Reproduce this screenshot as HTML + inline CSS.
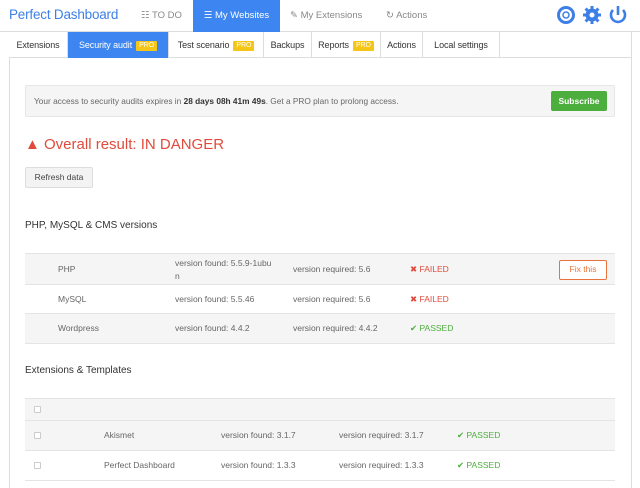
<!DOCTYPE html>
<html><head><meta charset="utf-8"><style>
*{margin:0;padding:0;box-sizing:border-box}
body{width:640px;height:480px;overflow:hidden;background:#fff;font-family:"Liberation Sans",sans-serif;font-size:10px;color:#555;position:relative}
.a{position:absolute;white-space:nowrap}
.top{position:absolute;left:0;top:0;width:640px;height:32px;border-bottom:1px solid #ddd}
.sub{position:absolute;left:9px;top:32px;width:623px;height:26px;border-bottom:1px solid #ddd;border-right:1px solid #ddd}
.st{position:absolute;top:0;height:26px;line-height:26px;font-size:9px;color:#333;border-right:1px solid #ddd;text-align:center;letter-spacing:-0.1px}
.pro{display:inline-block;background:#f5c518;color:#fff;font-size:7px;padding:0 3px;line-height:10px;border-radius:1px;margin-left:4px;vertical-align:1px}
.panel{position:absolute;left:9px;top:58px;width:623px;height:430px;border-left:1px solid #ddd;border-right:1px solid #ddd}
.row{position:absolute;left:25px;width:590px;border-bottom:1px solid #e4e4e4;font-size:8.5px;color:#666}
.g{background:#f5f5f5}
.red{color:#e04b3c}.grn{color:#4cae3c}
.cb{position:absolute;left:9px;width:7px;height:7px;border:1px solid #ccc;border-radius:1px;background:#fff}
</style></head><body>
<div class="top"></div>
<div class="a" style="left:9px;top:7px;font-size:13.5px;color:#3d7fe6;letter-spacing:-0.2px">Perfect Dashboard</div>
<div class="a" style="left:141px;top:10px;font-size:9.5px;color:#888">☷ TO DO</div>
<div class="a" style="left:193px;top:0;width:87px;height:32px;background:#3d85f0;color:#fff;font-size:9.5px;line-height:31px;text-align:center">☰ My Websites</div>
<div class="a" style="left:290px;top:10px;font-size:9.5px;color:#888">✎ My Extensions</div>
<div class="a" style="left:386px;top:10px;font-size:9.5px;color:#888">↻ Actions</div>
<svg class="a" style="left:556px;top:5px" width="80" height="22" viewBox="0 0 80 22">
<circle cx="10" cy="10" r="7.5" fill="none" stroke="#3d7fe6" stroke-width="3"/><circle cx="10" cy="10" r="3" fill="none" stroke="#3d7fe6" stroke-width="1.5"/>
<g fill="#3d7fe6"><circle cx="36" cy="10" r="6.5"/><g stroke="#3d7fe6" stroke-width="3"><line x1="36" y1="1" x2="36" y2="19"/><line x1="27" y1="10" x2="45" y2="10"/><line x1="29.6" y1="3.6" x2="42.4" y2="16.4"/><line x1="42.4" y1="3.6" x2="29.6" y2="16.4"/></g></g>
<circle cx="36" cy="10" r="2.5" fill="#fff"/>
<path d="M57 5 A7 7 0 1 0 67 5" fill="none" stroke="#3d7fe6" stroke-width="2.6"/><line x1="62" y1="1" x2="62" y2="10" stroke="#3d7fe6" stroke-width="2.6"/>
</svg>
<div class="sub">
<div class="st" style="left:0;width:59px">Extensions</div>
<div class="st" style="left:59px;width:101px;background:#3d85f0;color:#fff">Security audit<span class="pro">PRO</span></div>
<div class="st" style="left:160px;width:95px">Test scenario<span class="pro">PRO</span></div>
<div class="st" style="left:255px;width:48px">Backups</div>
<div class="st" style="left:303px;width:69px">Reports<span class="pro">PRO</span></div>
<div class="st" style="left:372px;width:42px">Actions</div>
<div class="st" style="left:414px;width:77px">Local settings</div>
</div>
<div class="panel"></div>
<div class="a" style="left:25px;top:85px;width:590px;height:32px;background:#f5f5f5;border:1px solid #e6e6e6;border-radius:2px"></div>
<div class="a" style="left:34px;top:96px;font-size:8.3px;color:#666">Your access to security audits expires in <b style="color:#333">28 days 08h 41m 49s</b>. Get a PRO plan to prolong access.</div>
<div class="a" style="left:551px;top:91px;width:56px;height:20px;background:#4cae3c;border-radius:2px;color:#fff;font-size:8.5px;font-weight:bold;line-height:20px;text-align:center">Subscribe</div>
<div class="a" style="left:25px;top:136px;font-size:15px;color:#e04b3c">▲ Overall result: IN DANGER</div>
<div class="a" style="left:25px;top:167px;width:68px;height:21px;background:#f3f3f3;border:1px solid #ddd;border-radius:2px;font-size:8.5px;color:#444;line-height:19px;text-align:center">Refresh data</div>
<div class="a" style="left:25px;top:220px;font-size:10px;color:#333">PHP, MySQL &amp; CMS versions</div>
<div class="row g" style="top:253px;height:32px;border-top:1px solid #e4e4e4">
<span class="a" style="left:33px;top:10px">PHP</span><span class="a" style="left:150px;top:3px;line-height:13px">version found: 5.5.9-1ubu<br>n</span><span class="a" style="left:268px;top:10px">version required: 5.6</span><span class="a red" style="left:385px;top:10px">✖ FAILED</span>
<span class="a" style="left:534px;top:6px;width:48px;height:20px;border:1.5px solid #e8743b;border-radius:2px;background:#fff;color:#e8743b;font-size:8.5px;line-height:17px;text-align:center">Fix this</span></div>
<div class="row" style="top:285px;height:29px"><span class="a" style="left:33px;top:9px">MySQL</span><span class="a" style="left:150px;top:9px">version found: 5.5.46</span><span class="a" style="left:268px;top:9px">version required: 5.6</span><span class="a red" style="left:385px;top:9px">✖ FAILED</span></div>
<div class="row g" style="top:314px;height:30px"><span class="a" style="left:33px;top:9px">Wordpress</span><span class="a" style="left:150px;top:9px">version found: 4.4.2</span><span class="a" style="left:268px;top:9px">version required: 4.4.2</span><span class="a grn" style="left:385px;top:9px">✔ PASSED</span></div>
<div class="a" style="left:25px;top:365px;font-size:10px;color:#333">Extensions &amp; Templates</div>
<div class="row g" style="top:398px;height:23px;border-top:1px solid #e4e4e4"><span class="cb" style="top:7px"></span></div>
<div class="row g" style="top:421px;height:30px"><span class="cb" style="top:11px"></span><span class="a" style="left:79px;top:9px">Akismet</span><span class="a" style="left:196px;top:9px">version found: 3.1.7</span><span class="a" style="left:314px;top:9px">version required: 3.1.7</span><span class="a grn" style="left:432px;top:9px">✔ PASSED</span></div>
<div class="row" style="top:451px;height:30px"><span class="cb" style="top:11px"></span><span class="a" style="left:79px;top:9px">Perfect Dashboard</span><span class="a" style="left:196px;top:9px">version found: 1.3.3</span><span class="a" style="left:314px;top:9px">version required: 1.3.3</span><span class="a grn" style="left:432px;top:9px">✔ PASSED</span></div>
</body></html>
